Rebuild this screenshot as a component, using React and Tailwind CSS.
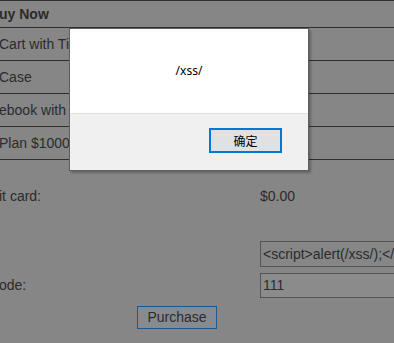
export default function App() {
  const items = ['Cart with Tile Tracker', 'Case', 'ebook with Retina', 'Plan $1000'];

  return (
    <div className="relative w-[394px] h-[343px] overflow-hidden bg-[#868686] text-[14px] text-[#2b2b2b] font-['Liberation_Sans',Arial,sans-serif]">
      {/* Cart table */}
      <div className="h-[28px] border-y border-[#2e2e2e] flex items-center font-bold whitespace-nowrap">
        <span className="-ml-[1px]">uy Now</span>
      </div>
      {items.map((text, i) => (
        <div key={i} className="h-[33px] border-b border-[#2e2e2e] flex items-center whitespace-nowrap">
          <span className="-ml-[1px]">{text}</span>
        </div>
      ))}

      {/* Checkout form */}
      <div className="mt-[23px] flex items-center h-[26px] whitespace-nowrap">
        <div className="w-[260px] shrink-0">
          <span className="-ml-[1px] inline-block">it card:</span>
        </div>
        <div>$0.00</div>
      </div>
      <div className="mt-[32px] flex items-center h-[26px]">
        <div className="w-[260px] shrink-0" />
        <div className="h-[26px] w-[220px] shrink-0 border border-[#555] bg-[#868686] pl-[2px] flex items-center whitespace-nowrap overflow-hidden">
          &lt;script&gt;alert(/xss/);&lt;/script&gt;
        </div>
      </div>
      <div className="mt-[6px] flex items-center h-[25px] whitespace-nowrap">
        <div className="w-[260px] shrink-0">
          <span className="-ml-[1px] inline-block">ode:</span>
        </div>
        <div className="h-[25px] w-[220px] shrink-0 border border-[#555] bg-[#8b8b8b] pl-[2px] flex items-center">
          111
        </div>
      </div>
      <div className="mt-[8px] ml-[137px] w-[80px] h-[23px] border border-[#1c5a8e] bg-[#878a90] flex items-center justify-center">
        Purchase
      </div>

      {/* Alert dialog */}
      <div className="absolute left-[69px] top-[28px] w-[240px] h-[143px] border border-[#5e5e5e] bg-white flex flex-col shadow-[2px_2px_2px_rgba(0,0,0,0.25)] font-['Noto_Sans','Noto_Sans_CJK_SC',sans-serif] text-[12px] text-black">
        <div className="h-[84px] flex items-center justify-center">/xss/</div>
        <div className="flex-1 bg-[#f0f0f0] border-t border-[#dfdfdf] flex justify-end items-start pt-[14px] pr-[26px]">
          <div className="w-[73px] h-[25px] border-2 border-[#0078d7] bg-[#e1e1e1] flex items-center justify-center font-['Noto_Sans_CJK_SC',sans-serif]">
            确定
          </div>
        </div>
      </div>
    </div>
  );
}
